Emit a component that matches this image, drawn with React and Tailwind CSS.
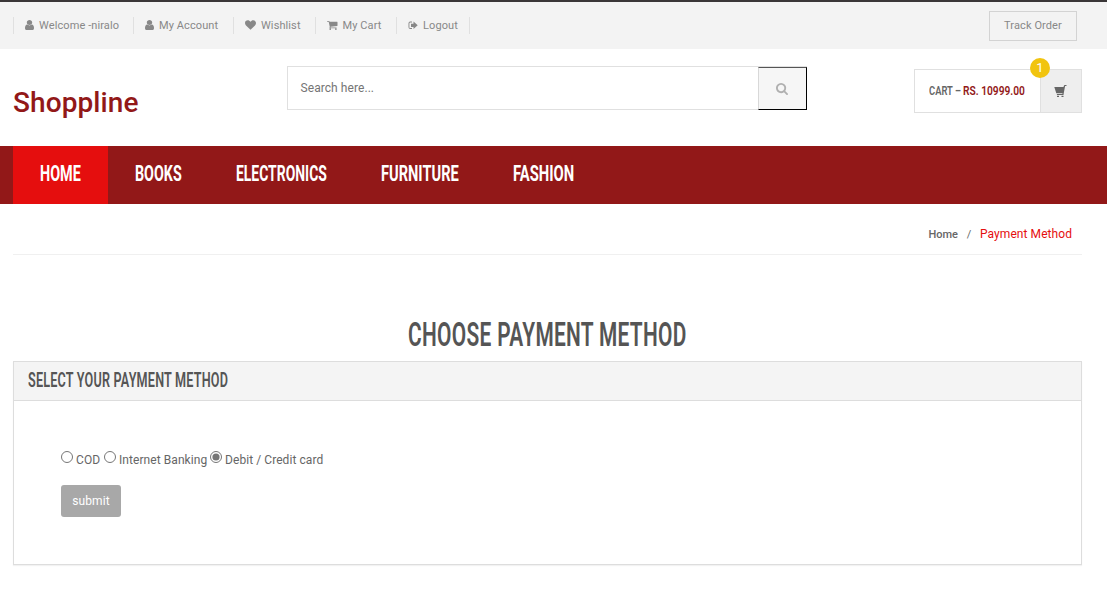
import { useLayoutEffect, useRef, useState } from "react";

const LINKS = [
  { label: "Welcome -niralo", icon: "user", box: "w-[120px]" },
  { label: "My Account", icon: "user", box: "w-[100px]" },
  { label: "Wishlist", icon: "heart", box: "w-[82px]" },
  { label: "My Cart", icon: "cart", box: "w-[81px]" },
  { label: "Logout", icon: "out", box: "w-[74px] border-r" },
];

const NAV = [
  { label: "HOME", width: "w-[41px]", box: "bg-[#e50e0e]" },
  { label: "BOOKS", width: "w-[47px]", box: "" },
  { label: "ELECTRONICS", width: "w-[91px]", box: "" },
  { label: "FURNITURE", width: "w-[78px]", box: "" },
  { label: "FASHION", width: "w-[61px]", box: "" },
];

// Heading text squeezed horizontally to the width of its box.
function Condensed({ children, className }) {
  const box = useRef(null);
  const text = useRef(null);
  const [scale, setScale] = useState(1);
  useLayoutEffect(() => {
    setScale(box.current.offsetWidth / text.current.offsetWidth);
  }, []);
  return (
    <span ref={box} className={`block shrink-0 whitespace-nowrap ${className}`}>
      <span ref={text} className="inline-block origin-left" style={{ transform: `scaleX(${scale})` }}>
        {children}
      </span>
    </span>
  );
}

function UserIcon() {
  return (
    <svg viewBox="0 0 1280 1536" preserveAspectRatio="none" className="-mt-[2px] h-[10px] w-[9px] shrink-0" fill="currentColor">
      <path d="M1280 1271q0 109-62.5 187t-150.5 78h-854q-88 0-150.5-78t-62.5-187q0-85 8.500-160.500t31.500-152 58.500-131 94-89 134.500-34.500q131 128 313 128t313-128q76 0 134.500 34.500t94 89 58.500 131 31.500 152 8.500 160.500zm-256-887q0 159-112.500 271.500t-271.500 112.500-271.500-112.500-112.500-271.500 112.500-271.500 271.500-112.500 271.500 112.500 112.500 271.500z" />
    </svg>
  );
}

function HeartIcon() {
  return (
    <svg viewBox="0 0 11 10" className="-mt-[2px] h-[10px] w-[11px] shrink-0" fill="currentColor">
      <path d="M5.500 9.700 1 5.400C.3 4.700 0 3.900 0 3 0 1.300 1.200.3 2.800.3c1.200 0 2 .7 2.700 1.500C6.200 1 7 .3 8.200.3 9.800.3 11 1.300 11 3c0 .9-.3 1.700-1 2.400z" />
    </svg>
  );
}

function CartIcon() {
  return (
    <svg viewBox="0 0 1664 1408" className="-mt-[2px] h-[9px] w-[10.5px] shrink-0" fill="currentColor">
      <path d="M640 1280q0 52-38 90t-90 38-90-38-38-90 38-90 90-38 90 38 38 90zm896 0q0 52-38 90t-90 38-90-38-38-90 38-90 90-38 90 38 38 90zm128-1088v512q0 24-16.500 42.500t-40.500 21.500l-1044 122q13 60 13 70 0 16-24 64h920q26 0 45 19t19 45-19 45-45 19h-1024q-26 0-45-19t-19-45q0-11 8-31.500t16-36 21.500-40 15.500-29.500l-177-823h-204q-26 0-45-19t-19-45 19-45 45-19h256q16 0 28.500 6.500t19.500 15.500 13 24.500 8 26 5.500 29.500 4.500 26h1201q26 0 45 19t19 45z" />
    </svg>
  );
}

function LogoutIcon() {
  return (
    <svg viewBox="0 0 10 9" className="-mt-[2px] h-[9px] w-[10px] shrink-0" fill="currentColor">
      <path d="M4 .6H2.2A1.7 1.7 0 0 0 .5 2.3v4A1.7 1.7 0 0 0 2.2 8H4v-.9H2.3a.9.9 0 0 1-.9-.9V2.4a.9.9 0 0 1 .9-.9H4z" />
      <path d="M5.500.6v2.100H3v3.200h2.500V8L9.700 4.300z" />
    </svg>
  );
}

function SearchIcon() {
  return (
    <svg viewBox="0 0 1664 1664" className="-ml-[1px] h-[12px] w-[12px]" fill="currentColor">
      <path d="M1152 704q0-185-131.500-316.500t-316.500-131.500-316.500 131.500-131.500 316.500 131.500 316.500 316.500 131.500 316.500-131.500 131.500-316.500zm512 832q0 52-38 90t-90 38q-54 0-90-38l-343-342q-179 124-399 124-143 0-273.500-55.500t-225-150-150-225-55.500-273.500 55.500-273.500 150-225 225-150 273.500-55.500 273.500 55.500 225 150 150 225 55.500 273.500q0 220-124 399l343 343q37 37 37 90z" />
    </svg>
  );
}

function BasketIcon() {
  return (
    <svg viewBox="0 0 13 13" className="-ml-[1px] h-[13px] w-[13px]" fill="currentColor">
      <path d="M.3 1.900h9.200L10 .6Q10.200 0 10.800 0h1.700v1.100h-1.400L9.700 8.600 9.500 10H2.900V9h5.500l.1-.8H2.300z" />
      <path d="M3 10.800h2V12H3zM7.500 10.800h2V12h-2z" />
    </svg>
  );
}

function LinkIcon({ name }) {
  if (name === "user") return <UserIcon />;
  if (name === "heart") return <HeartIcon />;
  if (name === "cart") return <CartIcon />;
  return <LogoutIcon />;
}

export default function App() {
  return (
    <div className="h-[613px] w-full overflow-hidden bg-white font-['Roboto',sans-serif] text-[12px] text-[#666666]">
      <div className="flex h-[49px] items-start justify-between border-t-2 border-[#3a3637] bg-[#f3f3f3] pr-[30px] pl-[13px] text-[11px] text-[#888888]">
        <ul className="mt-[15px] flex tracking-[0.1px]">
          {LINKS.map((l) => (
            <li key={l.label} className={`flex h-[17px] items-center gap-[5px] border-l border-[#e0e0e0] pt-[1px] pl-[11px] whitespace-nowrap ${l.box}`}>
              <LinkIcon name={l.icon} />
              {l.label}
            </li>
          ))}
        </ul>
        <button className="mt-[9px] h-[30px] w-[88px] border border-[#d3d3d3] pt-[1px] tracking-[0.1px]">Track Order</button>
      </div>

      <header className="flex h-[97px] items-start pl-[13px]">
        <h1 className="mt-[34px] w-[274px] text-[28px] leading-[40px] font-medium tracking-[0.1px] text-[#921818]">Shoppline</h1>
        <form className="mt-[17px] flex h-[44px] w-[520px] border border-r-0 border-[#e0e0e0]">
          <div className="flex-1 pt-[13px] pl-[12.5px] leading-[16px] tracking-[0.07px] text-[#757575]">Search here...</div>
          <button type="button" className="-mb-px flex h-[43px] w-[49px] items-center justify-center border border-t-[#555555] border-r-black border-b-black border-l-[#d8d8d8] bg-[#f6f6f6] text-[#b0b0b0]">
            <SearchIcon />
          </button>
        </form>
        <div className="relative mt-[20px] ml-[107px] flex h-[44px] w-[168px] border border-[#e0e0e0] text-[13.5px] font-semibold">
          <div className="flex flex-1 pt-[10px] pl-[14px] leading-[20px]">
            <Condensed className="w-[32px]">CART –</Condensed>
            <Condensed className="ml-[2px] w-[62px] text-[#921818]">RS. 10999.00</Condensed>
          </div>
          <div className="flex w-[41px] items-center justify-center border-l border-[#e0e0e0] bg-[#eeeeee]">
            <BasketIcon />
          </div>
          <span className="absolute -top-[12px] left-[115px] flex h-[20px] w-[20px] items-center justify-center rounded-full bg-[#f1c40f] pb-[1px] text-[13px] font-normal text-white">1</span>
        </div>
      </header>

      <nav className="flex h-[58px] bg-[#921818] pl-[13px] text-[22.5px] leading-[55px] font-bold text-white">
        {NAV.map((n) => (
          <div key={n.label} className={`px-[27px] ${n.box}`}>
            <Condensed className={n.width}>{n.label}</Condensed>
          </div>
        ))}
      </nav>

      <main className="pr-[25px] pl-[13px]">
        <div className="flex h-[51px] items-start justify-end border-b border-[#f0f0f0] pt-[20px] pr-[10px] leading-[20px]">
          <span className="pt-[1px] text-[11px] font-medium">Home</span>
          <span className="w-[22px] pt-[1px] text-center text-[11px]">/</span>
          <span className="tracking-[0.07px] text-[#e50e0e]">Payment Method</span>
        </div>
        <h2 className="mt-[59px] flex h-[47px] pl-[395px] text-[33px] leading-[41px] font-semibold tracking-[0.5px] text-[#555555]">
          <Condensed className="w-[279px]">CHOOSE PAYMENT METHOD</Condensed>
        </h2>
        <section className="h-[204px] border border-[#dddddd] shadow-[0_1px_1px_rgba(0,0,0,0.05)]">
          <div className="h-[39px] border-b border-[#dddddd] bg-[#f4f4f4] pl-[14px] text-[19.5px] leading-[37px] font-semibold tracking-[0.3px] text-[#555555]">
            <Condensed className="w-[200px]">SELECT YOUR PAYMENT METHOD</Condensed>
          </div>
          <form className="pt-[50px] pl-[47px]">
            <div className="flex h-[18px] items-start leading-[18px] tracking-[0.07px] whitespace-nowrap">
              <input type="radio" name="pay" className="m-0 mr-[3px] h-[12px] w-[12px]" />
              <label className="mr-[4px] w-[24px]">COD</label>
              <input type="radio" name="pay" className="m-0 mr-[3px] h-[12px] w-[12px]" />
              <label className="mr-[3px] w-[88px]">Internet Banking</label>
              <input type="radio" name="pay" defaultChecked className="m-0 mr-[3px] h-[12px] w-[12px] accent-[#767676]" />
              <label>Debit / Credit card</label>
            </div>
            <button type="button" className="mt-[16px] h-[32px] w-[60px] rounded-[3px] bg-[#a8a8a8] text-[12px] tracking-[0.07px] text-white">submit</button>
          </form>
        </section>
      </main>
    </div>
  );
}
